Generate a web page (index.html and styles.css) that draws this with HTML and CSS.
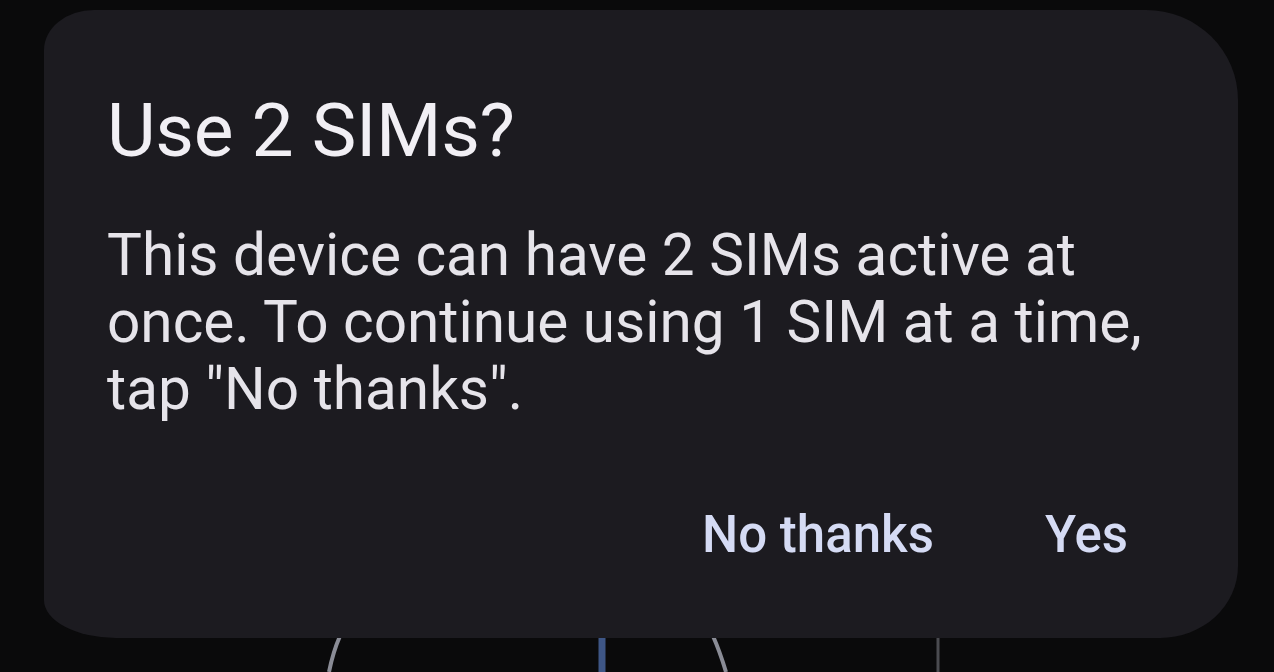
FILE: index.html
```html
<!DOCTYPE html>
<html lang="en">
<head>
    <meta charset="UTF-8">
    <meta name="viewport" content="width=device-width, initial-scale=1.0">
    <title>Use 2 SIMs?</title>
    <link rel="stylesheet" href="styles.css">
</head>
<body>

    <!-- what is left of the screen under the dialog -->
    <svg class="backdrop" width="1274" height="672" viewBox="0 0 1274 672">
        <path d="M340 636 Q333 652 329 672" stroke="#8a8c96" stroke-width="4" fill="none"/>
        <path d="M602 636 L602 672" stroke="#3e5686" stroke-width="7" fill="none"/>
        <path d="M713 636 Q720 652 726 672" stroke="#8a8c96" stroke-width="4" fill="none"/>
        <path d="M938 636 L938 672" stroke="#4a4b50" stroke-width="3" fill="none"/>
    </svg>

    <div class="dialog">
        <h1 class="dialog-title">Use 2 SIMs?</h1>
        <p class="dialog-text">This device can have 2 SIMs active at once. To continue using 1 SIM at a time, tap "No thanks".</p>
        <div class="dialog-actions">
            <button class="action">No thanks</button>
            <button class="action">Yes</button>
        </div>
    </div>

</body>
</html>
```

FILE: styles.css
```css
body {
    font-family: Roboto, "Noto Sans", sans-serif;
    background-color: #0a0a0b;
    margin: 0;
    padding: 0;
    width: 1274px;
    height: 672px;
    overflow: hidden;
    position: relative;
}
.backdrop {
    position: absolute;
    left: 0;
    top: 0;
}
.dialog {
    position: relative;
    width: 1194px;
    height: 628px;
    margin: 10px 0 0 44px;
    box-sizing: border-box;
    padding: 80px 40px 0 63px;
    background-color: #1c1b20;
    border-radius: 50px 92px 78px 72px / 40px 90px 72px 38px;
}
.dialog-title {
    margin: 0;
    font-size: 75px;
    font-weight: 400;
    line-height: 80px;
    color: #f1eff4;
    letter-spacing: -0.3px;
}
.dialog-text {
    margin: 52px 0 0 0;
    font-size: 58.5px;
    line-height: 67px;
    color: #e6e4ea;
    width: 1080px;
}
.dialog-actions {
    display: flex;
    justify-content: flex-end;
    gap: 111px;
    margin: 82px 70px 0 0;
}
.action {
    background: none;
    border: none;
    padding: 0;
    font-family: Roboto, "Noto Sans", sans-serif;
    font-size: 51px;
    font-weight: 500;
    line-height: 60px;
    color: #d5dbf4;
    cursor: pointer;
}
```
